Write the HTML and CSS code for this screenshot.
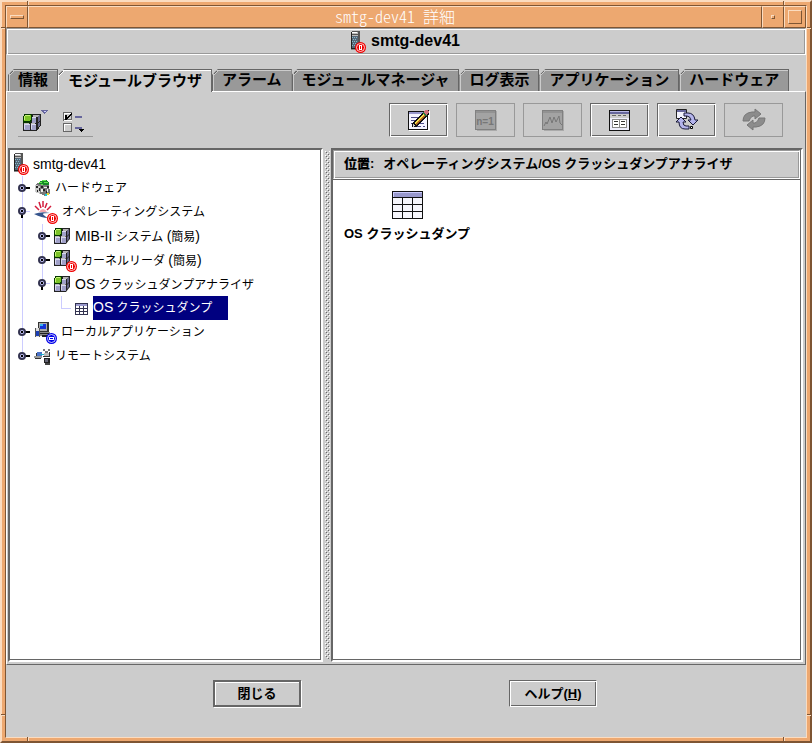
FILE: index.html
```html
<!DOCTYPE html>
<html lang="ja">
<head>
<meta charset="utf-8">
<title>smtg-dev41 詳細</title>
<link rel="stylesheet" href="styles.css">
</head>
<body>
<svg class="sprite" width="0" height="0" aria-hidden="true">
  <symbol id="badge" viewBox="0 0 11 11">
    <circle cx="5.500" cy="5.500" r="5.500" fill="currentColor"/>
    <circle cx="5.500" cy="5.500" r="4" fill="none" stroke="#fff" stroke-width=".8"/>
  </symbol>
  <symbol id="badge-alarm" viewBox="0 0 11 11">
    <use href="#badge" width="11" height="11"/><path d="M4 3h3v5h-3z" fill="#fff"/><path d="M5 4h1v3h-1z" fill="currentColor"/>
  </symbol>
  <symbol id="badge-off" viewBox="0 0 11 11">
    <use href="#badge" width="11" height="11"/><path d="M3 4h5v3h-5z" fill="#fff"/><path d="M4 5h3v1h-3z" fill="currentColor"/>
  </symbol>
  <symbol id="server" viewBox="0 0 16 24">
    <path d="M1 2h8v17h-8z" fill="#222"/><path d="M2 1h8v17h-8z" fill="#555"/><path d="M2 2h6v4h-6z" fill="#bbb"/><path d="M2 2h5v1h-5z" fill="#fff"/>
    <path d="M2 4h6v1h-6z" fill="#555"/><path d="M2 6h6v12h-6z" fill="#567"/>
    <path d="M2 7h1v1h-1zM4 7h1v1h-1zM6 7h1v1h-1zM3 9h1v1h-1zM5 9h1v1h-1zM2 11h1v1h-1zM4 11h1v1h-1zM6 11h1v1h-1zM3 13h1v1h-1zM5 13h1v1h-1zM2 15h1v1h-1zM4 15h1v1h-1z" fill="#8bc"/>
    <path d="M1 19h9v1h-9z" fill="#888"/>
    <use href="#badge-alarm" x="5" y="12" width="11" height="11" color="#f00000"/>
  </symbol>
  <symbol id="cubes" viewBox="0 0 17 24">
    <path d="M8 4h8v11l-1 1l-3 4h-12v-8l1-2h7z" fill="#222"/>
    <path d="M9 5h6l-2 2h-4z" fill="#b4b4b4"/>
    <path d="M8 7h4v5h-4z" fill="#a0a0c8"/><path d="M8 7h4v1h-4z" fill="#d8d8f0"/>
    <path d="M1 12h5l-1 1h-4zM7 12h5l-1 1h-4z" fill="#bbb"/>
    <path d="M13 7l2-2v5l-2 2zM13 13l2-2v4l-2 2z" fill="#66668a"/>
    <path d="M1 13h5v6h-5zM7 13h5v6h-5z" fill="#a0a0c8"/>
    <path d="M1 13h5v1h-5zM7 13h5v1h-5zM1 13h1v5h-1zM7 13h1v5h-1z" fill="#d8d8f0"/>
    <path d="M1 4h7v7h-1v1h-7v-6h1z" fill="#063800"/><path d="M2 5h5v5h-1v1h-5v-5h1z" fill="#7cc428"/><path d="M2 5h4v1h-4zM1 6h1v4h-1z" fill="#c8f478"/>
  </symbol>
  <symbol id="closed" viewBox="0 0 12 12">
    <path d="M7 5h5v2h-5z" fill="#000"/><circle cx="4" cy="6" r="3" fill="#ccccff" stroke="#333350" stroke-width="2"/><path d="M3 5h2v2h-2z" fill="#000"/>
  </symbol>
  <symbol id="open" viewBox="0 0 12 12">
    <path d="M3 8h2v4h-2z" fill="#000"/><path d="M8 5h4v1h-4z" fill="#ccccff"/><circle cx="4" cy="5" r="3" fill="#ccccff" stroke="#333350" stroke-width="2"/><path d="M3 4h2v2h-2z" fill="#000"/>
  </symbol>
</svg>

<div class="window">
<div class="window-inner">
  <div class="titlebar">
    <button class="frame-button" type="button" aria-label="メニュー"><i class="glyph-menu"></i></button>
    <div class="title">smtg-dev41 詳細</div>
    <button class="frame-button" type="button" aria-label="最小化"><i class="glyph-min"></i></button>
    <button class="frame-button" type="button" aria-label="最大化"><i class="glyph-max"></i></button>
  </div>

  <header class="host etched">
    <svg width="16" height="24"><use href="#server"/></svg>
    <h1>smtg-dev41</h1>
  </header>

  <div class="tabs" role="tablist">
    <button class="tab" type="button" role="tab">情報</button>
    <button class="tab active" type="button" role="tab" aria-selected="true">モジュールブラウザ</button>
    <button class="tab" type="button" role="tab">アラーム</button>
    <button class="tab" type="button" role="tab">モジュールマネージャ</button>
    <button class="tab" type="button" role="tab">ログ表示</button>
    <button class="tab" type="button" role="tab">アプリケーション</button>
    <button class="tab" type="button" role="tab">ハードウェア</button>
  </div>

  <main class="panel" role="tabpanel">
    <div class="toolbar">
      <div class="menus">
        <button class="menu-button" type="button" aria-label="表示">
          <svg width="26" height="26" viewBox="0 0 26 26" shape-rendering="crispEdges">
            <use href="#cubes" x="0" y="0" width="19" height="27"/>
            <path d="M18 1h7l-3 4h-1z" fill="#66669c"/><path d="M20 2h3l-1 1h-1z" fill="#ccccff"/>
          </svg>
        </button>
        <button class="menu-button" type="button" aria-label="選択">
          <svg width="24" height="24" viewBox="0 0 24 24" shape-rendering="crispEdges">
            <path d="M0 2h9v9h-9zM0 13h9v9h-9z" fill="#666"/><path d="M1 3h8v8h-8zM1 14h8v8h-8z" fill="#fff"/><path d="M2 4h6v6h-6zM2 15h6v6h-6z" fill="#ccc"/>
            <path d="M8 3h1v7h-1zM1 9h8v1h-8zM8 14h1v7h-1zM1 21h8v1h-8z" fill="#666"/>
            <path d="M2 5h2v2h1v-1h1v-1h1v-1h1v-1h1v2h-1v1h-1v1h-1v1h-1v1h-1v1h-2z" fill="#000"/>
            <path d="M12 6h7v2h-7zM12 17h7v2h-7z" fill="#66669c"/><path d="M16 19h5v1h-1v1h-1v1h-1v-1h-1v-1h-1z" fill="#000"/>
          </svg>
        </button>
      </div>
      <div class="actions">
        <button class="action raised" type="button" aria-label="編集">
          <svg width="24" height="24" viewBox="0 0 24 24" shape-rendering="crispEdges">
            <path d="M2 3h21v20h-21z" fill="#fff"/><path d="M1 3h20v19h-20z" fill="#111"/><path d="M2 4h18v17h-18z" fill="#f5f5ff"/>
            <path d="M2 4h18v2h-18z" fill="#9999cc"/>
            <path d="M4 9h7v1h-7zM4 12h5v1h-5zM4 15h3v1h-3zM11 15h6v1h-6zM5 18h9v1h-9zM16 18h2v1h-2z" fill="#4c4c88"/>
            <path d="M5 19v-4l13-13h3l1 1v3l-13 13z" fill="#111"/>
            <path d="M7 15l11-11 1 1-11 11z" fill="#f4e04a"/><path d="M8 16l11-11 1 1-10 11z" fill="#b5651d"/>
            <path d="M16 4l2-2h3l1 2-3 3z" fill="#d0707a"/><path d="M15 5l1-1 4 3-1 1z" fill="#287a3c"/><path d="M6 16l2 2-2 1z" fill="#ccc"/>
          </svg>
        </button>
        <button class="action" type="button" disabled aria-label="n=1">
          <svg width="24" height="24" viewBox="0 0 24 24" shape-rendering="crispEdges">
            <path d="M3 3h20v20h-20z" fill="#aaa"/><path d="M1 2h21v20h-21z" fill="#808080"/><path d="M2 5h19v16h-19z" fill="#a3a3a3"/><path d="M2 3h19v2h-19z" fill="#929292"/>
            <text x="11" y="17" text-anchor="middle" class="icon-text">n=1</text>
          </svg>
        </button>
        <button class="action" type="button" disabled aria-label="グラフ">
          <svg width="24" height="24" viewBox="0 0 24 24">
            <path d="M3 3h20v20h-20z" fill="#aaa"/><path d="M1 2h21v20h-21z" fill="#808080"/><path d="M2 5h19v16h-19z" fill="#a3a3a3"/><path d="M2 3h19v2h-19z" fill="#929292"/>
            <path d="M3 18l2-4 1 2 3-7 2 6 2-6 2 5 3-6 1 7 2 2" fill="none" stroke="#777"/>
          </svg>
        </button>
        <button class="action raised" type="button" aria-label="プロパティ">
          <svg width="24" height="24" viewBox="0 0 24 24" shape-rendering="crispEdges">
            <path d="M1 2h21v21h-21z" fill="#111"/><path d="M2 3h19v3h-19z" fill="#66669c"/><path d="M2 3h19v1h-19z" fill="#b9b9e6"/>
            <path d="M2 6h19v4h-19z" fill="#ccc"/><path d="M4 7h4v1h-4zM10 7h3v1h-3zM15 7h3v1h-3z" fill="#666"/>
            <path d="M2 10h19v12h-19z" fill="#eeeefc"/><path d="M4 11h15v9h-15z" fill="#888"/><path d="M5 12h6v7h-6zM12 12h6v7h-6z" fill="#fff"/>
            <path d="M6 13h4v1h-4zM6 16h4v1h-4zM13 13h4v1h-4zM13 16h4v1h-4z" fill="#333"/>
          </svg>
        </button>
        <button class="action raised" type="button" aria-label="再読み込み">
          <svg width="24" height="24" viewBox="0 0 24 24">
            <path d="M1.500 1.500h10v9h-10z" fill="#f2f2fc" stroke="#222"/><path d="M2 2h9v2h-9z" fill="#66669c"/>
            <path d="M9 5h4q6 0 7 7h3l-5 5-5-5h3q-1-4-4-4h-3z" fill="#b4b4ec" stroke="#181838"/>
            <path d="M14 21h-4q-6 0-6-7h-3l5-5 5 5h-3q0 4 3 4h3z" fill="#b4b4ec" stroke="#181838"/>
            <path d="M15.500 18.500h2v2h-2z" fill="#fff" stroke="#000"/>
          </svg>
        </button>
        <button class="action" type="button" disabled aria-label="更新">
          <svg width="24" height="24" viewBox="0 0 24 24">
            <path d="M1 13q0-8 9-9h3v-3l6 5-6 5v-3h-2q-3 1-4 5z" fill="#8c8c8c" stroke="#777"/>
            <path d="M23 10q0 8-9 9h-3v3l-6-5 6-5v3h2q3-1 4-5z" fill="#8c8c8c" stroke="#777"/>
          </svg>
        </button>
      </div>
    </div>

    <div class="split">
      <nav class="pane tree" aria-label="モジュール">
        <div class="row root"><svg width="16" height="24"><use href="#server"/></svg><span><span class="latin">smtg-dev41</span></span></div>
        <ul class="branch top">
          <li><div class="row">
            <svg width="12" height="12"><use href="#closed"/></svg>
            <svg width="17" height="24" viewBox="0 0 17 24" shape-rendering="crispEdges">
              <path d="M1 9l5-3 2-2 7 3 1 11-5 2-9-4z" fill="#777"/><path d="M4 7l5-3h3l3 3v2h-4l-6-1z" fill="#168a28"/>
              <path d="M5 6h3v1h-3zM8 4h4v1h-4zM10 6h4v1h-4zM7 8h2v1h-2z" fill="#65e850"/><path d="M1 9l5 1v8l-5-2z" fill="#ccc"/><path d="M2 10h2v2h-2zM3 14h1v2h-1zM5 12h1v3h-1zM7 10h2v2h-2zM9 13h2v2h-2zM13 10h2v2h-2zM12 15h1v2h-1z" fill="#222"/>
              <path d="M7 13h2v3h-2zM10 11h3v1h-3zM13 13h1v3h-1z" fill="#eee"/><path d="M13 17h2v2h-2z" fill="#e8d820"/><path d="M11 18h2v2h-2z" fill="#18c8d8"/>
            </svg><span>ハードウェア</span></div></li>
          <li><div class="row">
            <svg width="12" height="12"><use href="#open"/></svg>
            <svg width="24" height="24" viewBox="0 0 24 24">
              <path d="M1 6l4 4M5 2l2 6M9 1v6M13 3l-2 5M17 6l-4 4" stroke="#d41c3c" stroke-width="1.500"/>
              <path d="M5 12q4-6 8 0z" fill="#f4a8b0"/>
              <path d="M0 14q8-3 16-1-7 0-7 1t5 4q-6 0-14-4z" fill="#36548c"/>
              <use href="#badge-alarm" x="13" y="13" width="11" height="11" color="#f00000"/>
            </svg><span>オペレーティングシステム</span></div>
            <ul class="branch inner">
              <li><div class="row">
                <svg width="12" height="12"><use href="#closed"/></svg><svg width="17" height="24"><use href="#cubes"/></svg>
                <span><span class="latin">MIB-II</span> システム <span class="latin">(</span>簡易<span class="latin">)</span></span></div></li>
              <li><div class="row">
                <svg width="12" height="12"><use href="#closed"/></svg>
                <svg width="23" height="24" viewBox="0 0 23 24"><use href="#cubes" y="-2" width="17" height="24"/><use href="#badge-alarm" x="12" y="13" width="11" height="11" color="#f00000"/></svg>
                <span>カーネルリーダ <span class="latin">(</span>簡易<span class="latin">)</span></span></div></li>
              <li><div class="row">
                <svg width="12" height="12"><use href="#open"/></svg><svg width="17" height="24"><use href="#cubes"/></svg>
                <span><span class="latin">OS</span> クラッシュダンプアナライザ</span></div>
                <ul class="leaf">
                  <li><div class="row"><i class="elbow"></i>
                    <svg width="14" height="24" viewBox="0 0 14 24" shape-rendering="crispEdges">
                      <path d="M0 7h13v12h-13z" fill="#333350"/><path d="M1 8h11v2h-11z" fill="#9999cc"/>
                      <path d="M1 10h3v2h-3zM5 10h3v2h-3zM9 10h3v2h-3zM1 13h3v2h-3zM5 13h3v2h-3zM9 13h3v2h-3zM1 16h3v2h-3zM5 16h3v2h-3zM9 16h3v2h-3z" fill="#fff"/>
                    </svg><span class="selected"><span class="latin">OS</span> クラッシュダンプ</span></div></li>
                </ul></li>
            </ul></li>
          <li><div class="row">
            <svg width="12" height="12"><use href="#closed"/></svg>
            <svg width="23" height="24" viewBox="0 0 23 24" shape-rendering="crispEdges">
              <path d="M4 2h11v10h-11z" fill="#333"/><path d="M5 3h8v8h-8z" fill="#aaa"/><path d="M6 4h6v5h-6z" fill="#1535d8"/><path d="M6 4h3v2h-3z" fill="#37b6f0"/>
              <path d="M3 12h13v4h-13z" fill="#888"/><path d="M5 13h10v1h-10zM8 15h9v2h-9z" fill="#222"/>
              <path d="M1 8h4v9h-4z" fill="#ddd"/><path d="M1 8h1v9h-1zM5 8h1v9h-1z" fill="#555"/><path d="M2 11h3v5h-3z" fill="#1b3fb5"/>
              <use href="#badge-off" x="12" y="13" width="11" height="11" color="#0000e8" shape-rendering="auto"/>
            </svg><span>ローカルアプリケーション</span></div></li>
          <li><div class="row">
            <svg width="12" height="12"><use href="#closed"/></svg>
            <svg width="17" height="24" viewBox="0 0 17 24" shape-rendering="crispEdges">
              <path d="M3 8h5v4h-5z" fill="#4a72c8"/><path d="M0 12h8v2h-8z" fill="#999"/><path d="M1 14h6v1h-6zM2 9h1v3h-1z" fill="#333"/><path d="M6 10h5v1h-5z" fill="#18b0c8"/>
              <path d="M9 5h2v2h-2zM14 5h2v2h-2zM11 7h3v3h-3z" fill="#777"/><path d="M10 9h6v4h-6z" fill="#bbb"/><path d="M9 12h7v1h-7zM15 8h1v5h-1z" fill="#333"/>
              <path d="M10 14h6v5h-6z" fill="#222"/><path d="M11 15h3v3h-3z" fill="#667"/><path d="M11 19h5v2h-5z" fill="#444"/>
            </svg><span>リモートシステム</span></div></li>
        </ul>
      </nav>

      <div class="divider" role="separator"></div>

      <section class="pane detail">
        <div class="location etched"><b>位置:</b><span>オペレーティングシステム/OS クラッシュダンプアナライザ</span></div>
        <div class="items">
          <a class="item" href="#">
            <svg width="31" height="28" viewBox="0 0 31 28" shape-rendering="crispEdges">
              <path d="M0 0h31v28h-31z" fill="#111"/><path d="M1 1h29v5h-29z" fill="#9999cc"/><path d="M1 1h29v1h-29zM1 1h1v5h-1z" fill="#ccccff"/>
              <path d="M1 7h9v6h-9zM11 7h9v6h-9zM21 7h9v6h-9zM1 14h9v6h-9zM11 14h9v6h-9zM21 14h9v6h-9zM1 21h9v6h-9zM11 21h9v6h-9zM21 21h9v6h-9z" fill="#f6f6fc"/>
            </svg>
            <span>OS クラッシュダンプ</span>
          </a>
        </div>
      </section>
    </div>
  </main>

  <footer class="footer">
    <button class="command raised default" type="button">閉じる</button>
    <button class="command raised" type="button">ヘルプ(<u>H</u>)</button>
  </footer>
</div>
<i class="notch v top-left"></i><i class="notch v top-right"></i><i class="notch v bottom-left"></i><i class="notch v bottom-right"></i>
<i class="notch h left-top"></i><i class="notch h right-top"></i><i class="notch h left-bottom"></i><i class="notch h right-bottom"></i>
</div>
</body>
</html>
```

FILE: styles.css
```css
:root {
  --face: #cccccc;
  --tab: #999999;
  --dark: #666666;
  --wood: #eda870;
  --wood-light: #fbdcc0;
  --wood-dark: #7e5533;
  --guide: #ccccff;
}

* { box-sizing: border-box; }

body {
  margin: 0;
  color: #000;
  font-family: "Liberation Sans", "Noto Sans CJK JP", sans-serif;
  font-size: 13px;
}

button {
  margin: 0;
  padding: 0;
  border: 0;
  background: none;
  color: inherit;
  font: inherit;
}

svg { display: block; flex: none; }
.sprite { position: absolute; }

/* Window frame */
.window {
  position: relative;
  display: flex;
  min-height: 100vh;
  padding: 3px;
  border: 2px solid;
  border-color: var(--wood-light) var(--wood-dark) var(--wood-dark) var(--wood-light);
  background: var(--wood);
}

.window-inner {
  display: flex;
  flex: 1;
  flex-direction: column;
  min-width: 0;
  border: 1px solid;
  border-color: var(--wood-dark) var(--wood-light) var(--wood-light) var(--wood-dark);
  background: var(--face);
}

.titlebar { display: flex; height: 22px; background: var(--wood); }

.title, .frame-button {
  border: 1px solid;
  border-color: var(--wood-light) var(--wood-dark) var(--wood-dark) var(--wood-light);
}

.title {
  flex: 1;
  color: #fff;
  font-family: "Noto Sans CJK JP", sans-serif;
  font-size: 16px;
  font-weight: 300;
  font-feature-settings: "hwid";
  line-height: 18px;
  text-align: center;
}

.frame-button { display: grid; place-items: center; width: 22px; }

.frame-button i {
  border: 1px solid;
  border-color: var(--wood-light) var(--wood-dark) var(--wood-dark) var(--wood-light);
}

.glyph-menu { width: 14px; height: 4px; }
.glyph-min { width: 4px; height: 4px; }
.glyph-max { width: 14px; height: 14px; }

.notch { position: absolute; border: 0 solid var(--wood-dark); background: var(--wood-light); }
.notch.v { width: 2px; height: 4px; border-left-width: 1px; }
.notch.h { width: 4px; height: 2px; border-top-width: 1px; }
.top-left, .bottom-left { left: 25px; }
.top-right, .bottom-right { right: 25px; }
.top-left, .top-right { top: -1px; }
.bottom-left, .bottom-right { bottom: 0; }
.left-top, .right-top { top: 25px; }
.left-bottom, .right-bottom { bottom: 25px; }
.left-top, .left-bottom { left: -1px; }
.right-top, .right-bottom { right: -1px; }

/* Shared bevels */
.etched {
  border: 1px solid;
  border-color: #999 #fff #fff #999;
  box-shadow: inset 1px 1px #fff, inset -1px -1px #999;
}

.raised {
  border: 1px solid;
  border-color: var(--dark) #fff #fff var(--dark);
  box-shadow: inset 1px 1px #fff, inset -1px -1px var(--dark);
}

.host {
  display: flex;
  align-items: center;
  justify-content: center;
  gap: 5px;
  height: 27px;
  padding-right: 2px;
}

.host h1 { margin: 0; font-size: 16px; line-height: 22px; height: 24px; }

/* Tabs */
.tabs { display: flex; align-items: flex-end; margin-top: 14px; padding: 0 2px; }

.tab {
  height: 22px;
  padding: 0 10px 0 10px;
  background: linear-gradient(135deg, var(--dark) 5px, var(--face) 5px 6px, var(--tab) 6px);
  box-shadow: inset 1px 1px var(--dark), inset -1px 0 var(--dark), inset 2px 2px var(--face);
  clip-path: polygon(0 6px, 6px 0, 100% 0, 100% 100%, 0 100%);
  font-size: 15px;
  font-weight: bold;
  line-height: 22px;
  white-space: nowrap;
}

.tab.active {
  position: relative;
  height: 23px;
  margin-bottom: -1px;
  background: linear-gradient(135deg, var(--dark) 5px, #fff 5px 6px, var(--face) 6px);
  box-shadow: inset 0 1px var(--dark), inset -1px 0 var(--dark), inset 1px 2px #fff;
}

.panel {
  display: flex;
  flex: 1;
  flex-direction: column;
  padding: 0 2px 2px 1px;
  border: 1px solid;
  border-color: #fff var(--dark) var(--dark) #fff;
}

/* Toolbar */
.toolbar {
  display: flex;
  align-items: flex-start;
  justify-content: space-between;
  height: 56px;
  padding: 11px 20px 0 10px;
}

.menus { display: flex; gap: 14px; height: 34px; padding: 4px 6px 0 5px; border-bottom: 1px solid #999; }
.actions { display: flex; gap: 8px; }
.action { display: grid; place-items: center; width: 59px; height: 34px; }
.action:disabled { border: 1px solid #999; }
.icon-text { fill: #777; font: bold 10px "Liberation Sans", sans-serif; }

/* Split panes */
.split { display: grid; flex: 1; grid-template-columns: 315fr 8px 472fr; }

.pane {
  min-width: 0;
  border: 2px solid;
  border-color: var(--dark) #fff #fff var(--dark);
  background: #fff;
  box-shadow: inset -1px -1px var(--dark);
}

.divider {
  margin: 3px 1px 3px 2px;
  background:
    conic-gradient(at 1px 1px, transparent 75%, #fff 0) 0 0 / 4px 4px,
    conic-gradient(at 1px 1px, transparent 75%, #fff 0) 2px 2px / 4px 4px,
    conic-gradient(at 1px 1px, transparent 75%, var(--dark) 0) 1px 1px / 4px 4px,
    conic-gradient(at 1px 1px, transparent 75%, var(--dark) 0) 3px 3px / 4px 4px;
}

/* Tree */
.tree { padding: 2px 0; font-size: 12px; }
.tree ul { margin: 0; padding: 0; list-style: none; }
.row { display: flex; align-items: center; gap: 4px; height: 24px; line-height: 24px; white-space: nowrap; }
.root { padding-left: 3px; }
.latin { font-size: 14px; }

.branch {
  background: linear-gradient(var(--guide), var(--guide)) 4px 0 / 1px calc(100% - 12px) no-repeat;
}

/* The guide stops at the last child, above its open leaf row. */
.branch.inner { background-size: 1px calc(100% - 36px); }

.tree .branch { margin-left: 20px; }
.tree .top { margin-left: 8px; }
.tree .leaf { margin-left: 23px; }

.elbow {
  align-self: flex-start;
  width: 10px;
  height: 13px;
  border: solid var(--guide);
  border-width: 0 0 1px 1px;
}

.selected { padding-right: 16px; background: #000080; color: #fff; line-height: 23px; }

/* Detail */
.detail { font-weight: bold; }

.location {
  display: flex;
  align-items: center;
  gap: 9px;
  height: 29px;
  margin-right: 1px;
  padding: 0 10px;
  background: var(--face);
  line-height: 20px;
  white-space: nowrap;
}

.location > * { height: 22px; }

.items { margin-right: 1px; padding: 11px; border-top: 1px solid var(--dark); }

.item {
  display: inline-flex;
  flex-direction: column;
  align-items: center;
  gap: 4px;
  color: inherit;
  line-height: 22px;
  text-decoration: none;
}

/* Footer */
.footer { display: flex; justify-content: center; gap: 208px; padding: 15px 2px 30px 0; }
.command { width: 88px; height: 27px; font-weight: bold; line-height: 22px; }
.default { border-width: 2px; border-color: var(--dark); box-shadow: inset 1px 1px #fff, 1px 1px #fff; }
```
